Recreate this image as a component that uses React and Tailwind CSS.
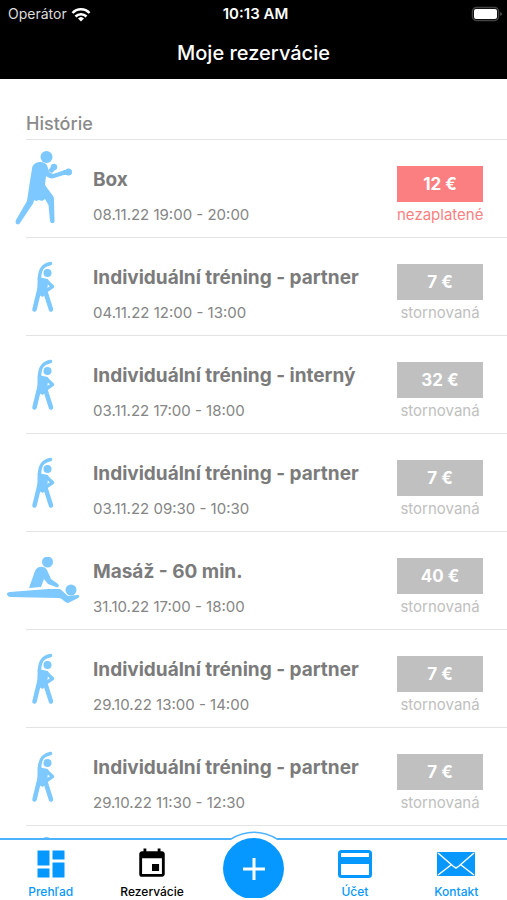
import React from 'react';
import { MdDashboard, MdEvent } from 'react-icons/md';

const reservations = [
  { id: 1, icon: 'box', title: 'Box', time: '08.11.22 19:00 - 20:00', price: '12 €', status: 'nezaplatené', unpaid: true },
  { id: 2, icon: 'stretch', title: 'Individuální tréning - partner', time: '04.11.22 12:00 - 13:00', price: '7 €', status: 'stornovaná' },
  { id: 3, icon: 'stretch', title: 'Individuální tréning - interný', time: '03.11.22 17:00 - 18:00', price: '32 €', status: 'stornovaná' },
  { id: 4, icon: 'stretch', title: 'Individuální tréning - partner', time: '03.11.22 09:30 - 10:30', price: '7 €', status: 'stornovaná' },
  { id: 5, icon: 'massage', title: 'Masáž - 60 min.', time: '31.10.22 17:00 - 18:00', price: '40 €', status: 'stornovaná' },
  { id: 6, icon: 'stretch', title: 'Individuální tréning - partner', time: '29.10.22 13:00 - 14:00', price: '7 €', status: 'stornovaná' },
  { id: 7, icon: 'stretch', title: 'Individuální tréning - partner', time: '29.10.22 11:30 - 12:30', price: '7 €', status: 'stornovaná' },
  { id: 8, icon: 'box' },
];

function BoxIcon() {
  return (
    <svg viewBox="13 152 60 76" className="w-[60px] h-[76px]" fill="currentColor" aria-hidden="true">
      <circle cx="46.5" cy="158" r="6" />
      <path d="M32 170C32 163 42 161 46 165C48 167 48 170 49 173L53 175L65 171L67 175L54 179C51 180 49 179 46 177L45 186L53 197C54 198 54 200 54 201L54.500 222C54.500 225 50.500 225 50 222L48.500 206L45 200L42 202L39 201L36 202L34 201C34 204 32 206 30 209L20 224C18 227 14.500 225 16 221L27 202L30 182Z" />
      <circle cx="54" cy="168" r="3.200" />
      <path d="M48 172l4-6 4 4-4 4z" />
      <circle cx="68.500" cy="173" r="3.500" />
      <circle cx="65" cy="173.500" r="2.500" />
    </svg>
  );
}

function StretchIcon() {
  return (
    <svg viewBox="31 261 24 52" className="w-6 h-[52px]" aria-hidden="true">
      <circle cx="47.500" cy="273" r="4" fill="currentColor" />
      <g fill="none" stroke="currentColor" strokeLinecap="round" strokeLinejoin="round">
        <path d="M50.500 263.500C43 265 39.500 269 39.500 279" strokeWidth="3.500" />
        <path d="M46 280.500l6.500 6L46 291" strokeWidth="3.500" />
        <path d="M39.500 289L34.500 309.500M44.500 289l6.500 20.500" strokeWidth="4.500" />
      </g>
      <path d="M37.700 277c3 1 7 1 10 2 2 2 0 5 0 7l-1 7-4 4-5.500-3z" fill="currentColor" />
    </svg>
  );
}

function MassageIcon() {
  return (
    <svg viewBox="6 557 74 48" className="w-[74px] h-12" fill="currentColor" aria-hidden="true">
      <circle cx="47.500" cy="562" r="5.500" />
      <path d="M29 588l6-17c2-5 9-6 12-1l4 9 7 5c2 2 0 4-2 3l-8-3-4-5-3 8z" />
      <path d="M10 592l38-3 12 0c3 2 5 5 8 7l9-1c3 0 3 2 1 3l-10 5c-3 0-6-5-9-5l-49-1c-4-1-4-5 0-5z" />
      <circle cx="71" cy="590" r="5.500" />
    </svg>
  );
}

function WifiIcon() {
  return (
    <svg viewBox="0 0 20 15" className="w-5 h-[15px]" fill="none" stroke="white" strokeWidth="2.500" aria-hidden="true">
      <path d="M1.500 6C6 1 14 1 18.500 6" />
      <path d="M4.500 9.500c3-3 8-3 11 0" />
      <path d="M7 11.500c2-2 4-2 6 0l-3 3z" fill="white" stroke="none" />
    </svg>
  );
}

function BatteryIcon() {
  return (
    <svg viewBox="0 0 32 16" className="w-8 h-4" aria-hidden="true">
      <rect x="1.5" y="1.5" width="26" height="13" rx="4" fill="none" stroke="#444" strokeWidth="1.5" />
      <rect x="3" y="3" width="23" height="10" rx="2" fill="white" />
      <path d="M29 6c3 1 3 3 0 4z" fill="#444" />
    </svg>
  );
}

function CardIcon() {
  return (
    <svg viewBox="0 0 36 30" className="w-9 h-[30px]" aria-hidden="true">
      <rect x="2.500" y="2.500" width="31" height="25" rx="2" fill="none" stroke="currentColor" strokeWidth="3" />
      <path d="M2 8h32v7H2z" fill="currentColor" />
    </svg>
  );
}

function MailIcon() {
  return (
    <svg viewBox="0 0 38 24" className="w-[38px] h-6" aria-hidden="true">
      <rect width="38" height="24" rx="1" fill="currentColor" />
      <path d="M1 1l15 13 3 2 3-2L37 1M1 23l13-10M37 23L24 13" fill="none" stroke="white" strokeWidth="1.500" />
    </svg>
  );
}

const icons = { box: BoxIcon, stretch: StretchIcon, massage: MassageIcon };

function ReservationRow({ item }) {
  const Icon = icons[item.icon];
  return (
    <li className="flex h-[98px]">
      <div className="w-[86px] shrink-0 flex items-center justify-center text-[#7cc8ff]">
        <Icon />
      </div>
      {item.title && (
        <>
          <div className="flex-1 min-w-0 pt-7 pl-[7px]">
            <h3 className="text-[19px] leading-6 font-bold text-[#7b7b7b] whitespace-nowrap">{item.title}</h3>
            <p className="mt-[13px] text-[15px] leading-5 text-[#858585]">{item.time}</p>
          </div>
          <div className="w-[86px] mr-6 shrink-0 pt-[26px] text-center">
            <div className={`h-9 leading-9 text-[17px] font-bold text-white ${item.unpaid ? 'bg-[#fb7f80]' : 'bg-[#c0c0c0]'}`}>
              {item.price}
            </div>
            <p className={`mt-[3px] text-[15px] leading-5 ${item.unpaid ? 'text-[#fb7f80]' : 'text-[#c0c0c0]'}`}>{item.status}</p>
          </div>
        </>
      )}
    </li>
  );
}

function NavItem({ icon, label, active }) {
  return (
    <a
      href="#"
      aria-current={active ? 'page' : undefined}
      className={`flex-1 flex flex-col items-center pt-1 ${active ? 'text-black' : 'text-[#0798ff]'}`}
    >
      <span className="h-10 flex items-center">{icon}</span>
      <span className="text-xs leading-4 font-medium">{label}</span>
    </a>
  );
}

export default function App() {
  return (
    <div className="h-screen flex flex-col bg-white font-['Inter','Liberation_Sans',sans-serif]">
      <header className="bg-black text-white shrink-0 pb-3">
        <div className="grid grid-cols-3 items-center h-7 pl-2 pr-1 text-sm">
          <span className="flex items-center gap-1 text-[#ddd]">
            Operátor <WifiIcon />
          </span>
          <span className="text-center text-[15px] font-semibold">10:13 AM</span>
          <span className="flex justify-end">
            <BatteryIcon />
          </span>
        </div>
        <h1 className="mt-[11px] text-center text-xl leading-7 font-medium">Moje rezervácie</h1>
      </header>

      <main className="flex-1 min-h-0 overflow-hidden">
        <h2 className="pt-[33px] pl-[26px] text-lg leading-6 h-[60px] font-medium text-[#8a8a8a]">Histórie</h2>
        <div className="ml-[26px] h-px bg-[#e4e4e4]" />
        <ul>
          {reservations.map((item) => (
            <React.Fragment key={item.id}>
              <ReservationRow item={item} />
              <li role="separator" className="-mt-px ml-[26px] h-px bg-[#e4e4e4]" />
            </React.Fragment>
          ))}
        </ul>
      </main>

      <nav className="relative shrink-0 flex h-[62px] bg-white border-t-2 border-[#4db2fc]">
        {/* arc that lifts the border over the add button */}
        <svg viewBox="0 0 48 11" className="absolute left-1/2 -top-[9px] -ml-6 w-12 h-[11px]" aria-hidden="true">
          <path d="M0 8.500Q24 -6 48 8.500V11H0z" fill="white" />
          <path d="M0 8.500Q24 -6 48 8.500" fill="none" stroke="#4db2fc" strokeWidth="1.500" />
        </svg>
        <NavItem label="Prehľad" icon={<MdDashboard size={36} />} />
        <NavItem label="Rezervácie" icon={<MdEvent size={34} />} active />
        <div className="relative flex-1 flex justify-center items-start -mt-[2px] h-[60px] overflow-hidden">
          <button
            type="button"
            aria-label="Pridať"
            className="w-[61px] h-[61px] shrink-0 rounded-full bg-[#0798ff] text-white flex items-center justify-center"
          >
            <svg viewBox="0 0 22 22" className="w-[22px] h-[22px]" stroke="currentColor" strokeWidth="3" aria-hidden="true">
              <path d="M11 0v22M0 11h22" />
            </svg>
          </button>
        </div>
        <NavItem label="Účet" icon={<CardIcon />} />
        <NavItem label="Kontakt" icon={<MailIcon />} />
      </nav>
    </div>
  );
}
